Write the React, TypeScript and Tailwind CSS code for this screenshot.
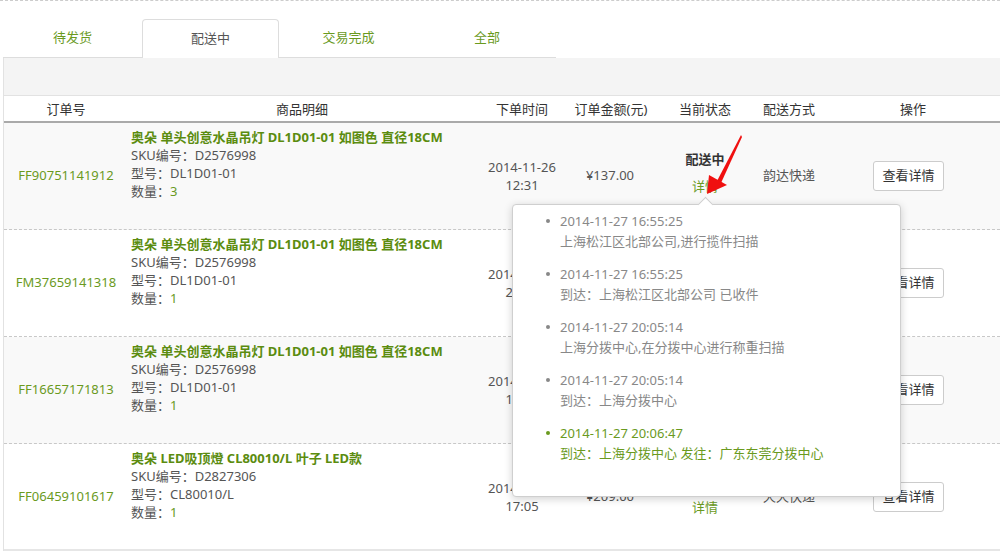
import React from "react";

type Row = {
  id: string;
  title: string;
  sku: string;
  model: string;
  qty: string;
  date: string;
  time: string;
  amount: string;
  ship: string;
  bg: string;
};

const rows: Row[] = [
  {
    id: "FF90751141912",
    title: "奥朵 单头创意水晶吊灯 DL1D01-01 如图色 直径18CM",
    sku: "D2576998",
    model: "DL1D01-01",
    qty: "3",
    date: "2014-11-26",
    time: "12:31",
    amount: "¥137.00",
    ship: "韵达快递",
    bg: "bg-[#f9f9f9]",
  },
  {
    id: "FM37659141318",
    title: "奥朵 单头创意水晶吊灯 DL1D01-01 如图色 直径18CM",
    sku: "D2576998",
    model: "DL1D01-01",
    qty: "1",
    date: "2014-11-26",
    time: "21:08",
    amount: "¥137.00",
    ship: "韵达快递",
    bg: "bg-white",
  },
  {
    id: "FF16657171813",
    title: "奥朵 单头创意水晶吊灯 DL1D01-01 如图色 直径18CM",
    sku: "D2576998",
    model: "DL1D01-01",
    qty: "1",
    date: "2014-11-25",
    time: "10:42",
    amount: "¥137.00",
    ship: "韵达快递",
    bg: "bg-[#f9f9f9]",
  },
  {
    id: "FF06459101617",
    title: "奥朵 LED吸顶燈 CL80010/L 叶子 LED款",
    sku: "D2827306",
    model: "CL80010/L",
    qty: "1",
    date: "2014-11-24",
    time: "17:05",
    amount: "¥209.00",
    ship: "天天快递",
    bg: "bg-white",
  },
];

const logs = [
  { t: "2014-11-27 16:55:25", d: "上海松江区北部公司,进行揽件扫描", last: false },
  { t: "2014-11-27 16:55:25", d: "到达：上海松江区北部公司 已收件", last: false },
  { t: "2014-11-27 20:05:14", d: "上海分拨中心,在分拨中心进行称重扫描", last: false },
  { t: "2014-11-27 20:05:14", d: "到达：上海分拨中心", last: false },
  { t: "2014-11-27 20:06:47", d: "到达：上海分拨中心 发往：广东东莞分拨中心", last: true },
];

const cols = "grid grid-cols-[124px_348px_92px_90px_94px_74px_174px]";

export default function App() {
  return (
    <div
      className="relative w-[1000px] h-[552px] overflow-hidden bg-white text-[13px] text-[#555]"
      style={{ fontFamily: '"Noto Sans", "Noto Sans CJK SC", sans-serif' }}
    >
      <div className="border-t border-dashed border-[#ccc]" />
      {/* tabs */}
      <div className="mt-[18px] ml-[3px] w-[553px] h-[39px] flex items-end border-b border-[#ddd]">
        <div className="w-[139px] h-[38px] flex items-center justify-center text-[#6a9a1e]">待发货</div>
        <div className="w-[137px] h-[39px] -mb-px flex items-center justify-center bg-white border border-b-0 border-[#ddd] rounded-t-[4px] text-[#555]">
          配送中
        </div>
        <div className="w-[139px] h-[38px] flex items-center justify-center text-[#6a9a1e]">交易完成</div>
        <div className="w-[138px] h-[38px] flex items-center justify-center text-[#6a9a1e]">全部</div>
      </div>
      {/* gray bar */}
      <div className="ml-[3px] h-[38px] bg-[#f4f4f4] border-l border-b border-[#e2e2e2]" />
      {/* table */}
      <div className="ml-[3px] border-l border-[#e2e2e2]">
        <div className={`${cols} h-[27px] border-b-2 border-[#aaa] text-[#333] items-center text-center leading-[20px]`}>
          <div>订单号</div>
          <div>商品明细</div>
          <div>下单时间</div>
          <div className="pr-[4px]">订单金额(元)</div>
          <div>当前状态</div>
          <div>配送方式</div>
          <div>操作</div>
        </div>
        {rows.map((r, i) => (
          <div
            key={i}
            className={`${cols} h-[107px] ${r.bg} ${
              i < rows.length - 1 ? "border-b border-dashed border-[#c8c8c8]" : "border-b-2 border-[#e6e6e6]"
            }`}
          >
            <div className="flex items-center justify-center text-[#6a9a1e]">{r.id}</div>
            <div className="pt-[5px] pl-[3px] leading-[18px]">
              <div className="font-bold text-[#5b8c0f]">{r.title}</div>
              <div>SKU编号：{r.sku}</div>
              <div>型号：{r.model}</div>
              <div>
                数量：<span className="text-[#6a9a1e]">{r.qty}</span>
              </div>
            </div>
            <div className="flex flex-col items-center justify-center leading-[18px]">
              <div>{r.date}</div>
              <div>{r.time}</div>
            </div>
            <div className="flex items-center justify-center pr-[6px]">{r.amount}</div>
            <div className="flex flex-col items-center justify-center pb-[7px] leading-[18px]">
              <div className="font-bold text-[#333]">配送中</div>
              <div className="mt-[9px] text-[#6a9a1e]">详情</div>
            </div>
            <div className="flex items-center justify-center">{r.ship}</div>
            <div className="flex items-center pl-[47px]">
              <button className="w-[71px] h-[30px] border border-[#ccc] rounded-[3px] bg-white text-[#333] text-[13px]">
                查看详情
              </button>
            </div>
          </div>
        ))}
      </div>

      {/* logistics popup */}
      <div className="absolute left-[512px] top-[204px] w-[389px] h-[293px] bg-white border border-[#cfcfcf] rounded-[4px] shadow-[0_2px_8px_rgba(0,0,0,0.18)]">
        <div className="absolute left-[187px] -top-[6px] w-[11px] h-[11px] bg-white border-l border-t border-[#cfcfcf] rotate-45" />
        <div className="relative pt-[6px] flex flex-col gap-[13px]">
          {logs.map((l, i) => (
            <div key={i} className={`flex leading-[20px] ${l.last ? "text-[#6a9a1e]" : "text-[#888]"}`}>
              <div className="w-[47px] flex justify-end pr-[10px] pt-[8px]">
                <span className={`block w-[4px] h-[4px] rounded-full ${l.last ? "bg-[#6a9a1e]" : "bg-[#888]"}`} />
              </div>
              <div>
                <div>{l.t}</div>
                <div>{l.d}</div>
              </div>
            </div>
          ))}
        </div>
      </div>

      {/* red annotation arrow */}
      <svg className="absolute left-0 top-0 pointer-events-none" width="1000" height="552">
        <polygon points="741,135 742,137 721,183 717,181" fill="#f01010" />
        <polygon points="707,194 709,175 727,185" fill="#f01010" />
      </svg>
    </div>
  );
}
